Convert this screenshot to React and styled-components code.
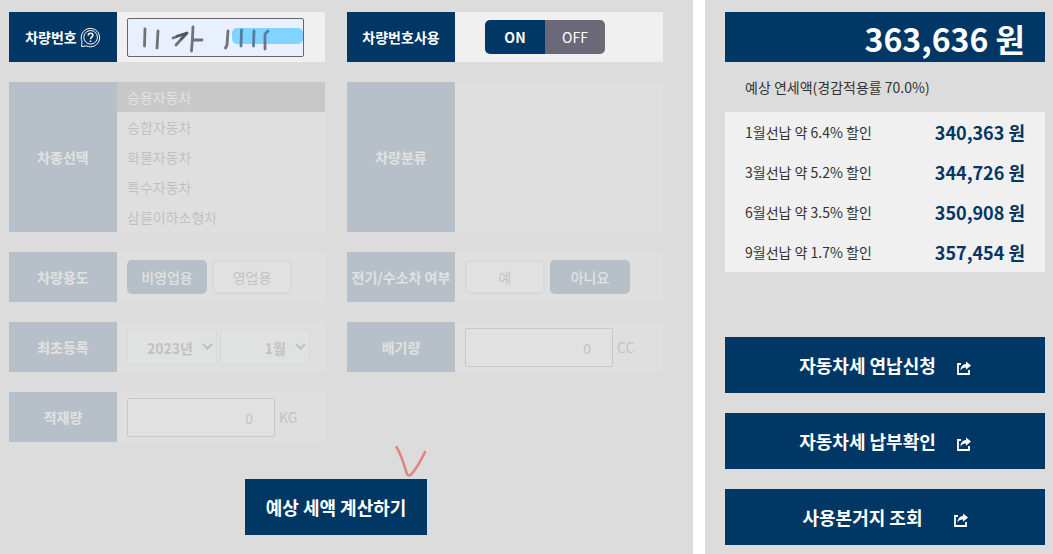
import React, { useState } from "react";
import styled, { createGlobalStyle } from "styled-components";

const GlobalStyle = createGlobalStyle`
  * {
    box-sizing: border-box;
  }

  body {
    margin: 0;
    background: #fff;
    color: #333;
    font-family: "Noto Sans CJK KR", "Noto Sans", sans-serif;
    font-size: 14px;
    line-height: 20px;
  }

  button,
  input,
  select {
    font: inherit;
    color: inherit;
  }
`;

const Page = styled.main`
  display: grid;
  grid-template-columns: minmax(0, 1fr) 348px;
  gap: 12px;
  min-height: 100vh;
`;

const Panel = styled.section`
  background: #dcdcdc;
`;

const FormPanel = styled(Panel)`
  padding: 12px 30px 19px 9px;
`;

const ResultPanel = styled(Panel)`
  padding: 12px 8px 9px 20px;
`;

const FormGrid = styled.div`
  display: grid;
  grid-template-columns: repeat(2, minmax(0, 1fr));
  gap: 20px 22px;
`;

const Field = styled.div`
  display: flex;
  min-height: ${({ $tall }) => ($tall ? "150px" : "50px")};
  background: #f0f0f0;
  opacity: ${({ $dim }) => ($dim ? 0.16 : 1)};
`;

const FieldName = styled.label`
  display: flex;
  flex: 0 0 108px;
  align-items: center;
  justify-content: center;
  gap: 3px;
  background: #003764;
  color: #fff;
  font-weight: bold;
  white-space: nowrap;
`;

const FieldBody = styled.div`
  display: flex;
  flex: 1;
  align-items: center;
  gap: ${({ $gap }) => $gap || "5px"};
  padding-left: ${({ $indent }) => ($indent ? "30px" : "10px")};
`;

const TypeList = styled.ul`
  flex: 1;
  margin: 0;
  padding: 0;
  list-style: none;
`;

const TypeButton = styled.button`
  display: block;
  width: 100%;
  height: 30px;
  padding: 0 10px;
  border: 0;
  background: ${({ $active }) => ($active ? "#666" : "transparent")};
  color: ${({ $active }) => ($active ? "#fff" : "#333")};
  text-align: left;
`;

const Choice = styled.button`
  width: 80px;
  height: 34px;
  padding: 0;
  border: 2px solid ${({ $active }) => ($active ? "#003764" : "#c8c8c8")};
  border-radius: 5px;
  background: ${({ $active }) => ($active ? "#003764" : "#fff")};
  color: ${({ $active }) => ($active ? "#fff" : "#333")};
  font-weight: ${({ $active }) => ($active ? 500 : 400)};
`;

const Toggle = styled.div`
  display: flex;
  overflow: hidden;
  border-radius: 5px;
`;

const ToggleButton = styled.button`
  width: 60px;
  height: 34px;
  padding: 0;
  border: 0;
  background: ${({ $active }) => ($active ? "#003764" : "#6b6878")};
  color: #fff;
  font-weight: ${({ $active }) => ($active ? "bold" : "normal")};
`;

const PlateBox = styled.div`
  position: relative;
  width: 177px;

  svg {
    position: absolute;
    inset: 0;
    pointer-events: none;
  }
`;

const TextInput = styled.input`
  display: block;
  width: ${({ $plate }) => ($plate ? "177px" : "148px")};
  height: 39px;
  padding: 2px 21px 0;
  border: 1px solid #66646e;
  border-radius: 2px;
  background: ${({ $plate }) => ($plate ? "#e8f0fe" : "#fff")};
  text-align: right;
`;

const SelectBox = styled.div`
  position: relative;
  width: 90px;

  svg {
    position: absolute;
    top: 14px;
    right: 4px;
    pointer-events: none;
  }
`;

const Select = styled.select`
  display: block;
  width: 100%;
  height: 36px;
  padding: 2px 23px 0 4px;
  border: 1px solid #c8d2cd;
  border-radius: 0;
  background: #f8fffb;
  font-weight: bold;
  text-align-last: right;
  appearance: none;
`;

const CalcRow = styled.div`
  position: relative;
  display: flex;
  justify-content: center;
  margin-top: 37px;

  svg {
    position: absolute;
    top: -36px;
    left: 50%;
    margin-left: 56px;
  }
`;

const CalcButton = styled.button`
  height: 56px;
  padding: 0 21px;
  border: 0;
  background: #003764;
  color: #fff;
  font-size: 18px;
  font-weight: bold;
`;

const Total = styled.p`
  height: 50px;
  margin: 0;
  padding: 0 20px;
  background: #003764;
  color: #fff;
  font-size: 32px;
  font-weight: bold;
  line-height: 52px;
  text-align: right;
`;

const TotalNote = styled.p`
  margin: 0;
  padding: 15px 20px;
`;

const Discounts = styled.dl`
  margin: 0;
  padding: 0 20px;
  background: #f0f0f0;
`;

const Discount = styled.div`
  display: flex;
  align-items: center;
  justify-content: space-between;
  height: 40px;

  dt {
    margin: 0;
  }

  dd {
    margin: 0;
    color: #003764;
    font-size: 18px;
    font-weight: bold;
  }
`;

const Links = styled.nav`
  display: flex;
  flex-direction: column;
  gap: 20px;
  margin-top: 65px;
`;

const LinkButton = styled.a`
  display: flex;
  align-items: center;
  justify-content: center;
  gap: ${({ $wide }) => ($wide ? "31px" : "21px")};
  height: 56px;
  background: #003764;
  color: #fff;
  font-size: 18px;
  font-weight: bold;
  text-decoration: none;

  svg {
    margin-top: 6px;
  }
`;

const HelpIcon = () => (
  <svg width="21" height="21" viewBox="0 0 21 21" fill="none" stroke="#fff">
    <path d="M1.6 19.6L2 14.4A9.2 9.2 0 1 1 6.4 18.9Z" strokeWidth="1" />
    <circle cx="10.6" cy="10.3" r="6.8" strokeWidth="1" />
    <path d="M8.2 8.4C8.2 5.4 12.9 5.4 12.9 8.3C12.9 10.2 10.5 10 10.5 12.2M10.5 13.4V15" strokeWidth="1.5" />
  </svg>
);

const ShareIcon = () => (
  <svg width="14" height="14" viewBox="0 0 14 14" fill="none">
    <path d="M4 3H1V13H12V9" stroke="#fff" strokeWidth="1.8" />
    <path d="M9 0.5L14 4.6L9 8.8V6.4C6.4 6.3 4.8 7.2 3.4 9.6C3.6 5.6 5.6 3.2 9 2.9Z" fill="#fff" />
  </svg>
);

const Chevron = () => (
  <svg width="11" height="8" viewBox="0 0 11 8" fill="none" stroke="#333" strokeWidth="2.2">
    <path d="M1 1L5.5 5.6L10 1" />
  </svg>
);

const PlateMarks = () => (
  <svg width="177" height="39" viewBox="0 0 177 39" fill="none" strokeLinecap="round" strokeLinejoin="round">
    <rect x="105" y="10" width="71" height="16" rx="5" fill="#80d4ff" />
    <g stroke="#6f7278" strokeWidth="2.8">
      <path d="M18 11L17.5 28M31 13L30 30M46 20L60 15L49 27M66 9L65.500 20L64.5 33M66 22L75 22" />
      <path d="M101 13L100 27L98.500 30" />
    </g>
    <path d="M50 18L60 15L54 21" stroke="#505358" strokeWidth="2.2" />
    <g stroke="#527f99" strokeWidth="2.8">
      <path d="M114.500 12L114 28M127 13L126.500 28M141 13L138 16L138 25" />
    </g>
    <path d="M138 26V31" stroke="#6f7278" strokeWidth="2.8" />
  </svg>
);

const CheckMark = () => (
  <svg
    width="34"
    height="34"
    viewBox="0 0 34 34"
    fill="none"
    stroke="#e08484"
    strokeWidth="2.6"
    strokeLinecap="round"
    strokeLinejoin="round"
  >
    <path d="M4.5 4C9 11 12 21 15 31C16 33 18 33 19.5 31C24 26 29 17 33 9" />
  </svg>
);

const types = ["승용자동차", "승합자동차", "화물자동차", "특수자동차", "삼륜이하소형차"];

const discounts = [
  { label: "1월선납 약 6.4% 할인", price: "340,363 원" },
  { label: "3월선납 약 5.2% 할인", price: "344,726 원" },
  { label: "6월선납 약 3.5% 할인", price: "350,908 원" },
  { label: "9월선납 약 1.7% 할인", price: "357,454 원" },
];

const App = () => {
  const [usePlate, setUsePlate] = useState(true);
  const [type, setType] = useState(types[0]);
  const [business, setBusiness] = useState(false);
  const [electric, setElectric] = useState(false);

  return (
    <>
      <GlobalStyle />
      <Page>
        <FormPanel>
          <FormGrid>
            <Field>
              <FieldName htmlFor="plate">
                차량번호
                <HelpIcon />
              </FieldName>
              <FieldBody>
                <PlateBox>
                  <TextInput id="plate" $plate />
                  <PlateMarks />
                </PlateBox>
              </FieldBody>
            </Field>
            <Field>
              <FieldName as="span">차량번호사용</FieldName>
              <FieldBody $indent>
                <Toggle>
                  <ToggleButton $active={usePlate} onClick={() => setUsePlate(true)}>
                    ON
                  </ToggleButton>
                  <ToggleButton $active={!usePlate} onClick={() => setUsePlate(false)}>
                    OFF
                  </ToggleButton>
                </Toggle>
              </FieldBody>
            </Field>
            <Field $tall $dim>
              <FieldName as="span">차종선택</FieldName>
              <TypeList>
                {types.map((name) => (
                  <li key={name}>
                    <TypeButton $active={name === type} onClick={() => setType(name)}>
                      {name}
                    </TypeButton>
                  </li>
                ))}
              </TypeList>
            </Field>
            <Field $tall $dim>
              <FieldName as="span">차량분류</FieldName>
            </Field>
            <Field $dim>
              <FieldName as="span">차량용도</FieldName>
              <FieldBody>
                <Choice $active={!business} onClick={() => setBusiness(false)}>
                  비영업용
                </Choice>
                <Choice $active={business} onClick={() => setBusiness(true)}>
                  영업용
                </Choice>
              </FieldBody>
            </Field>
            <Field $dim>
              <FieldName as="span">전기/수소차 여부</FieldName>
              <FieldBody>
                <Choice $active={electric} onClick={() => setElectric(true)}>
                  예
                </Choice>
                <Choice $active={!electric} onClick={() => setElectric(false)}>
                  아니요
                </Choice>
              </FieldBody>
            </Field>
            <Field $dim>
              <FieldName as="span" id="registered">
                최초등록
              </FieldName>
              <FieldBody $gap="3px">
                <SelectBox>
                  <Select aria-labelledby="registered">
                    <option>2023년</option>
                  </Select>
                  <Chevron />
                </SelectBox>
                <SelectBox>
                  <Select aria-labelledby="registered">
                    <option>1월</option>
                  </Select>
                  <Chevron />
                </SelectBox>
              </FieldBody>
            </Field>
            <Field $dim>
              <FieldName htmlFor="displacement">배기량</FieldName>
              <FieldBody $gap="4px">
                <TextInput id="displacement" defaultValue="0" />
                <span>CC</span>
              </FieldBody>
            </Field>
            <Field $dim>
              <FieldName htmlFor="load">적재량</FieldName>
              <FieldBody $gap="4px">
                <TextInput id="load" defaultValue="0" />
                <span>KG</span>
              </FieldBody>
            </Field>
          </FormGrid>
          <CalcRow>
            <CalcButton>예상 세액 계산하기</CalcButton>
            <CheckMark />
          </CalcRow>
        </FormPanel>
        <ResultPanel>
          <Total>363,636 원</Total>
          <TotalNote>예상 연세액(경감적용률 70.0%)</TotalNote>
          <Discounts>
            {discounts.map(({ label, price }) => (
              <Discount key={label}>
                <dt>{label}</dt>
                <dd>{price}</dd>
              </Discount>
            ))}
          </Discounts>
          <Links>
            <LinkButton href="#pay">
              자동차세 연납신청
              <ShareIcon />
            </LinkButton>
            <LinkButton href="#check">
              자동차세 납부확인
              <ShareIcon />
            </LinkButton>
            <LinkButton href="#place" $wide>
              사용본거지 조회
              <ShareIcon />
            </LinkButton>
          </Links>
        </ResultPanel>
      </Page>
    </>
  );
};

export default App;
